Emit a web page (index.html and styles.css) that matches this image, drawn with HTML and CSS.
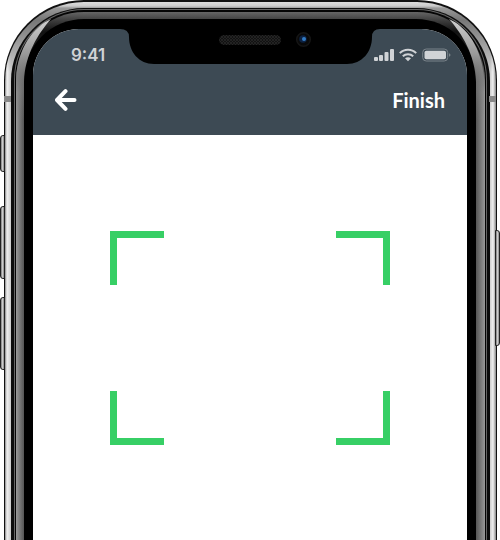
FILE: index.html
```html
<!DOCTYPE html>
<html lang="en">
<head>
<meta charset="utf-8">
<meta name="viewport" content="width=device-width, initial-scale=1">
<title>Scan</title>
<link rel="stylesheet" href="styles.css">
</head>
<body>
<div class="device">
  <span class="key key-mute"></span>
  <span class="key key-up"></span>
  <span class="key key-down"></span>
  <span class="key key-power"></span>
  <div class="edge"><div class="steel"><div class="groove"><div class="line"><div class="inner-groove"><div class="rim"><div class="bezel">
    <main class="screen">
      <header class="top">
        <div class="status">
          <time class="clock">9:41</time>
          <div class="indicators">
            <svg width="20" height="14" viewBox="0 0 20 14" aria-hidden="true"><rect y="9" width="4" height="4" rx="1"/><rect x="5" y="7" width="4" height="6" rx="1"/><rect x="10.500" y="4" width="4" height="9" rx="1"/><rect x="16" y="1" width="4" height="12" rx="1"/></svg>
            <svg width="18" height="14" viewBox="0 0 18 14" aria-hidden="true"><path class="wave" d="M.8 5.100C5.300.6 12.700.6 17.200 5.100M3.800 8.300c2.900-2.800 7.500-2.800 10.400 0"/><path d="M6 10.300c1.700-1.500 4.300-1.500 6 0L9 13.300z"/></svg>
            <svg width="29" height="14" viewBox="0 0 29 14" aria-hidden="true"><rect class="shell" x=".7" y="1" width="25" height="12" rx="3.500"/><rect x="2.500" y="2.700" width="21.500" height="8.600" rx="1.800"/><path class="cap" d="M27 5.300c2 .5 2 3 0 3.500z"/></svg>
          </div>
        </div>
        <nav class="bar">
          <button class="back" type="button" aria-label="Back"><svg width="22" height="22" viewBox="0 0 22 22" aria-hidden="true"><path d="M10.500 2.200 2 11l8.500 8.800M2.500 11H19.500"/></svg></button>
          <button class="finish" type="button">Finish</button>
        </nav>
      </header>
      <section class="finder" aria-label="Scan area">
        <span class="corner tl"></span><span class="corner tr"></span>
        <span class="corner bl"></span><span class="corner br"></span>
      </section>
    </main>
  </div></div></div></div></div></div></div>
  <svg class="glint glint-left" width="80" height="130" viewBox="0 0 80 130" aria-hidden="true">
    <defs><linearGradient id="g" gradientUnits="userSpaceOnUse" x1="0" y1="19" x2="0" y2="120"><stop offset="0" stop-color="#d0d0d0"/><stop offset=".35" stop-color="#999"/><stop offset=".6" stop-color="#888" stop-opacity=".6"/><stop offset="1" stop-color="#777" stop-opacity="0"/></linearGradient></defs>
    <path fill="url(#g)" d="M51 19C33 27 18 48 16 78v50h8V82C25 54 38 34 51 19z"/>
  </svg>
  <svg class="glint glint-right" width="80" height="130" viewBox="0 0 80 130" aria-hidden="true">
    <path fill="url(#g)" d="M51 19C33 27 18 48 16 78v50h8V82C25 54 38 34 51 19z"/>
  </svg>
  <span class="band band-left"></span><span class="band band-right"></span>
  <div class="notch">
    <svg width="260" height="46" viewBox="0 0 260 46" aria-hidden="true">
      <defs><pattern id="mesh" width="3" height="3" patternUnits="userSpaceOnUse"><rect width="3" height="3" fill="#121212"/><path d="M0 0l3 3M3 0L0 3" stroke="#2a2a2a" stroke-width=".7"/></pattern></defs>
      <path d="M0 0h260v10q-8 0-8 8c0 15-10 27-25 27H34C19 45 9 33 9 18q0-8-9-8z"/>
      <rect x="99" y="16" width="62" height="10" rx="5" fill="url(#mesh)"/>
      <circle cx="183.500" cy="20.500" r="6.800" fill="#090909" stroke="#151515" stroke-width="1.500"/>
      <circle cx="183" cy="20" r="3.800" fill="#0d2140"/><circle cx="184" cy="20" r="2" fill="#327bc4"/>
    </svg>
  </div>
</div>
</body>
</html>
```
FILE: styles.css
```css
* { box-sizing: border-box; }
body {
  margin: 0;
  background: #fff;
  font-family: Lato, sans-serif;
}
.device {
  position: relative;
  min-height: 100vh;
  padding: 0 3px 0 4px;
  display: flex;
  overflow: hidden;
}
.edge, .steel, .groove, .line, .inner-groove, .rim, .bezel {
  flex: 1;
  display: flex;
}
.edge { background: #111; padding: 2px 1px 0; border-radius: 80px 80px 0 0; }
.steel {
  padding: 6px 6px 0;
  border-radius: 79px 79px 0 0;
  background:
    linear-gradient(#ddd, #ccc 4px, #999 6px, #777 18px, transparent 70px),
    linear-gradient(to right, #888, #f0f0f0 2px, #ccc 6px, #ccc calc(100% - 6px), #f0f0f0 calc(100% - 3px), #888);
}
.groove { background: #0c0c0c; padding: 1px 3px 0; border-radius: 73px 73px 0 0; }
.line { background: #666; padding: 1px 1px 0; border-radius: 70px 70px 0 0; }
.inner-groove { background: #050505; padding: 2px 1px 0; border-radius: 69px 69px 0 0; }
.rim {
  padding: 7px 9px 0 8px;
  border-radius: 68px 68px 0 0;
  background:
    linear-gradient(#666, #444 7px, #111 20px, transparent 80px),
    linear-gradient(to right, #999, #555 8px, #555 calc(100% - 9px), #999);
}
.bezel { background: #000; padding: 10px 9px 0 9px; border-radius: 60px 60px 0 0; }
.screen {
  flex: 1;
  border-radius: 46px 46px 0 0;
  overflow: hidden;
  background: #fff;
  display: flex;
  flex-direction: column;
}
.top { background: #3d4a54; padding: 16px 16px 14px 20px; }
.status {
  display: flex;
  justify-content: space-between;
  align-items: center;
  height: 20px;
  padding-left: 18px;
}
.clock {
  font: 600 17px/20px Inter, sans-serif;
  color: #d0d3d6;
}
.indicators { display: flex; gap: 5px; fill: #d0d3d6; }
.wave { fill: none; stroke: #d0d3d6; stroke-width: 2; }
.shell { fill: none; stroke: #7a838a; }
.cap { fill: #7a838a; }
.bar {
  display: flex;
  justify-content: space-between;
  align-items: center;
  margin-top: 14px;
  padding-right: 6px;
}
button {
  border: 0;
  padding: 0;
  background: none;
  color: #fff;
  cursor: pointer;
}
.back { display: flex; padding: 10px 2px; }
.back svg { fill: none; stroke: #fff; stroke-width: 4; stroke-linecap: round; stroke-linejoin: round; }
.finish { font: 700 20px/24px Lato, sans-serif; }
.finder {
  display: grid;
  grid-template-columns: 54px 54px;
  grid-template-rows: 54px 54px;
  justify-content: space-between;
  row-gap: 106px;
  margin: 96px 77px;
}
.corner { border: 0 solid #37cf65; }
.tl { border-width: 7px 0 0 7px; }
.tr { border-width: 7px 7px 0 0; }
.bl { border-width: 0 0 7px 7px; }
.br { border-width: 0 7px 7px 0; }
.notch {
  position: absolute;
  top: 19px;
  left: 50%;
  transform: translateX(-50%);
}
.notch svg { display: block; }
.glint { position: absolute; top: 0; }
.glint-left { left: 0; }
.glint-right { right: 0; transform: scaleX(-1); }
.band { position: absolute; top: 96px; width: 7px; height: 6px; background: #888; }
.band-left { left: 4px; }
.band-right { right: 4px; }
.key {
  position: absolute;
  width: 5px;
  border: 1px solid #222;
  background: linear-gradient(to right, #777, #ccc, #888);
}
.key-mute { left: 0; top: 135px; height: 37px; border-radius: 3px 0 0 3px; }
.key-up { left: 0; top: 206px; height: 73px; border-radius: 3px 0 0 3px; }
.key-down { left: 0; top: 297px; height: 73px; border-radius: 3px 0 0 3px; }
.key-power { right: 0; top: 230px; height: 116px; border-radius: 0 3px 3px 0; }
```
